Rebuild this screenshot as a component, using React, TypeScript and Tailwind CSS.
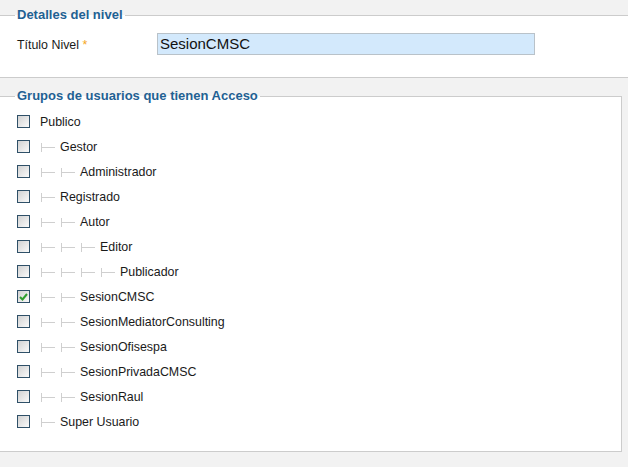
import React from "react";

type Item = { name: string; level: number; checked?: boolean };

const items: Item[] = [
  { name: "Publico", level: 0 },
  { name: "Gestor", level: 1 },
  { name: "Administrador", level: 2 },
  { name: "Registrado", level: 1 },
  { name: "Autor", level: 2 },
  { name: "Editor", level: 3 },
  { name: "Publicador", level: 4 },
  { name: "SesionCMSC", level: 2, checked: true },
  { name: "SesionMediatorConsulting", level: 2 },
  { name: "SesionOfisespa", level: 2 },
  { name: "SesionPrivadaCMSC", level: 2 },
  { name: "SesionRaul", level: 2 },
  { name: "Super Usuario", level: 1 },
];

function Box({ checked }: { checked?: boolean }) {
  return (
    <div className="w-[13px] h-[13px] shrink-0 border border-[#2f5068] bg-gradient-to-br from-[#d2d2d2] to-[#fafafa] flex items-center justify-center">
      {checked && (
        <svg width="9" height="8" viewBox="0 0 9 8">
          <path d="M1 4 L3.5 6.5 L8 1" stroke="#2f9e2f" strokeWidth="2" fill="none" />
        </svg>
      )}
    </div>
  );
}

function Connector() {
  return (
    <span className="inline-flex items-center w-[20px] h-[12px] shrink-0">
      <span className="w-px h-[9px] bg-[#cfcfcf] ml-px" />
      <span className="w-[13px] h-px bg-[#cfcfcf]" />
    </span>
  );
}

export default function App() {
  return (
    <div
      className="w-[628px] h-[467px] bg-[#f2f2f2] overflow-hidden text-[12.4px] text-[#1a1a1a]"
      style={{ fontFamily: '"Liberation Sans", Arial, sans-serif' }}
    >
      <fieldset className="mt-[7px] w-[640px] border-t border-b border-[#cccccc] bg-white pb-[22px]">
        <legend className="ml-[15px] px-[2px] leading-[16px] text-[13px] font-bold text-[#1f6193]">
          Detalles del nivel
        </legend>
        <div className="flex items-center pt-[10px]">
          <div className="w-[157px] pl-[17px] pt-[2px]">
            Título Nivel <span className="text-[#f5a623]">*</span>
          </div>
          <div className="w-[378px] h-[22px] bg-[#d3e9fc] border border-[#b9c2c9] flex items-center pl-[2px] text-[15px] text-[#111]">
            SesionCMSC
          </div>
        </div>
      </fieldset>

      <fieldset className="mt-[10px] w-[622px] border-t border-b border-r border-[#cccccc] bg-white pt-[5px] pb-[17px]">
        <legend className="ml-[15px] px-[2px] leading-[16px] text-[13px] font-bold text-[#1f6193]">
          Grupos de usuarios que tienen Acceso
        </legend>
        {items.map((it) => (
          <div key={it.name} className="flex items-center h-[25px] pl-[17px]">
            <Box checked={it.checked} />
            <div className="flex items-center ml-[10px] pt-[2px]">
              {Array.from({ length: it.level }).map((_, i) => (
                <Connector key={i} />
              ))}
              <span>{it.name}</span>
            </div>
          </div>
        ))}
      </fieldset>
    </div>
  );
}
